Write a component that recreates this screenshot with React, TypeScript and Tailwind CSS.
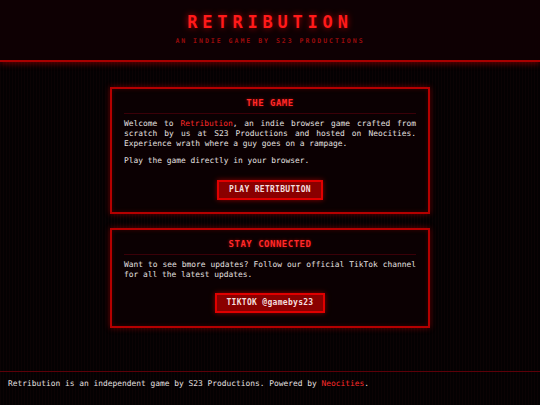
import React from 'react';

const mono = "font-['DejaVu_Sans_Mono','Liberation_Mono',monospace]";

const Card: React.FC<{ title: string; children: React.ReactNode }> = ({ title, children }) => (
  <section className="w-[320px] border-2 border-[#b40000] bg-[#0b0002] px-[12px] pt-[8px] shadow-[0_0_6px_rgba(220,0,0,0.45),inset_0_0_4px_rgba(200,0,0,0.25)]">
    <h2 className="text-center text-[9px] font-bold leading-[12px] tracking-[0.5px] text-[#ff2a2a] [text-shadow:0_0_3px_rgba(255,0,0,0.6)]">
      {title}
    </h2>
    <div className="mt-[4px] h-px bg-[#3a0008]" />
    {children}
  </section>
);

const Button: React.FC<{ label: string }> = ({ label }) => (
  <div className="flex justify-center">
    <a
      href="#"
      className="border-2 border-[#e00000] bg-[#8a0000] px-[10px] py-[3px] text-center text-[8px] font-bold leading-[10px] tracking-[0.3px] text-[#f4dede] shadow-[0_0_5px_rgba(255,0,0,0.5)]"
    >
      {label}
    </a>
  </div>
);

export default function App() {
  return (
    <div
      className={`${mono} flex min-h-[405px] w-[540px] flex-col bg-[#060203] bg-[repeating-linear-gradient(90deg,#0b0304_0px,#0b0304_1px,#040102_1px,#040102_3px)] text-[#e6e0e0]`}
    >
      {/* header */}
      <header className="h-[62px] border-b-2 border-[#a80000] bg-[#0e0003] pt-[10px] text-center shadow-[0_2px_6px_rgba(200,0,0,0.45)]">
        <h1 className="text-[17px] font-bold leading-[24px] tracking-[4.8px] text-[#ff1a1a] [text-shadow:0_0_6px_rgba(255,0,0,0.7)]">
          RETRIBUTION
        </h1>
        <p className="mt-[3px] text-[6.5px] font-bold leading-[8px] tracking-[2px] text-[#9a0c0c]">
          AN INDIE GAME BY S23 PRODUCTIONS
        </p>
      </header>

      <main className="flex flex-1 flex-col items-center gap-[14px] pt-[25px]">
        <Card title="THE GAME">
          <p className="mt-[5px] text-justify text-[7.9px] leading-[10px]">
            Welcome to <span className="text-[#ff2a2a]">Retribution</span>, an indie browser game crafted from
            scratch by us at S23 Productions and hosted on Neocities. Experience wrath where a guy goes on a
            rampage.
          </p>
          <p className="mt-[7px] text-[7.9px] leading-[10px]">Play the game directly in your browser.</p>
          <div className="pb-[12px] pt-[14px]">
            <Button label="PLAY RETRIBUTION" />
          </div>
        </Card>

        <Card title="STAY CONNECTED">
          <p className="mt-[5px] text-justify text-[7.9px] leading-[10px]">
            Want to see bmore updates? Follow our official TikTok channel for all the latest updates.
          </p>
          <div className="pb-[13px] pt-[13px]">
            <Button label="TIKTOK @gamebys23" />
          </div>
        </Card>
      </main>

      {/* footer */}
      <footer className="mt-auto h-[34px] border-t border-[#5c0008] px-[8px] pt-[7px] text-[7.9px] leading-[10px]">
        Retribution is an independent game by S23 Productions. Powered by{' '}
        <span className="text-[#ff2a2a]">Neocities</span>.
      </footer>
    </div>
  );
}
